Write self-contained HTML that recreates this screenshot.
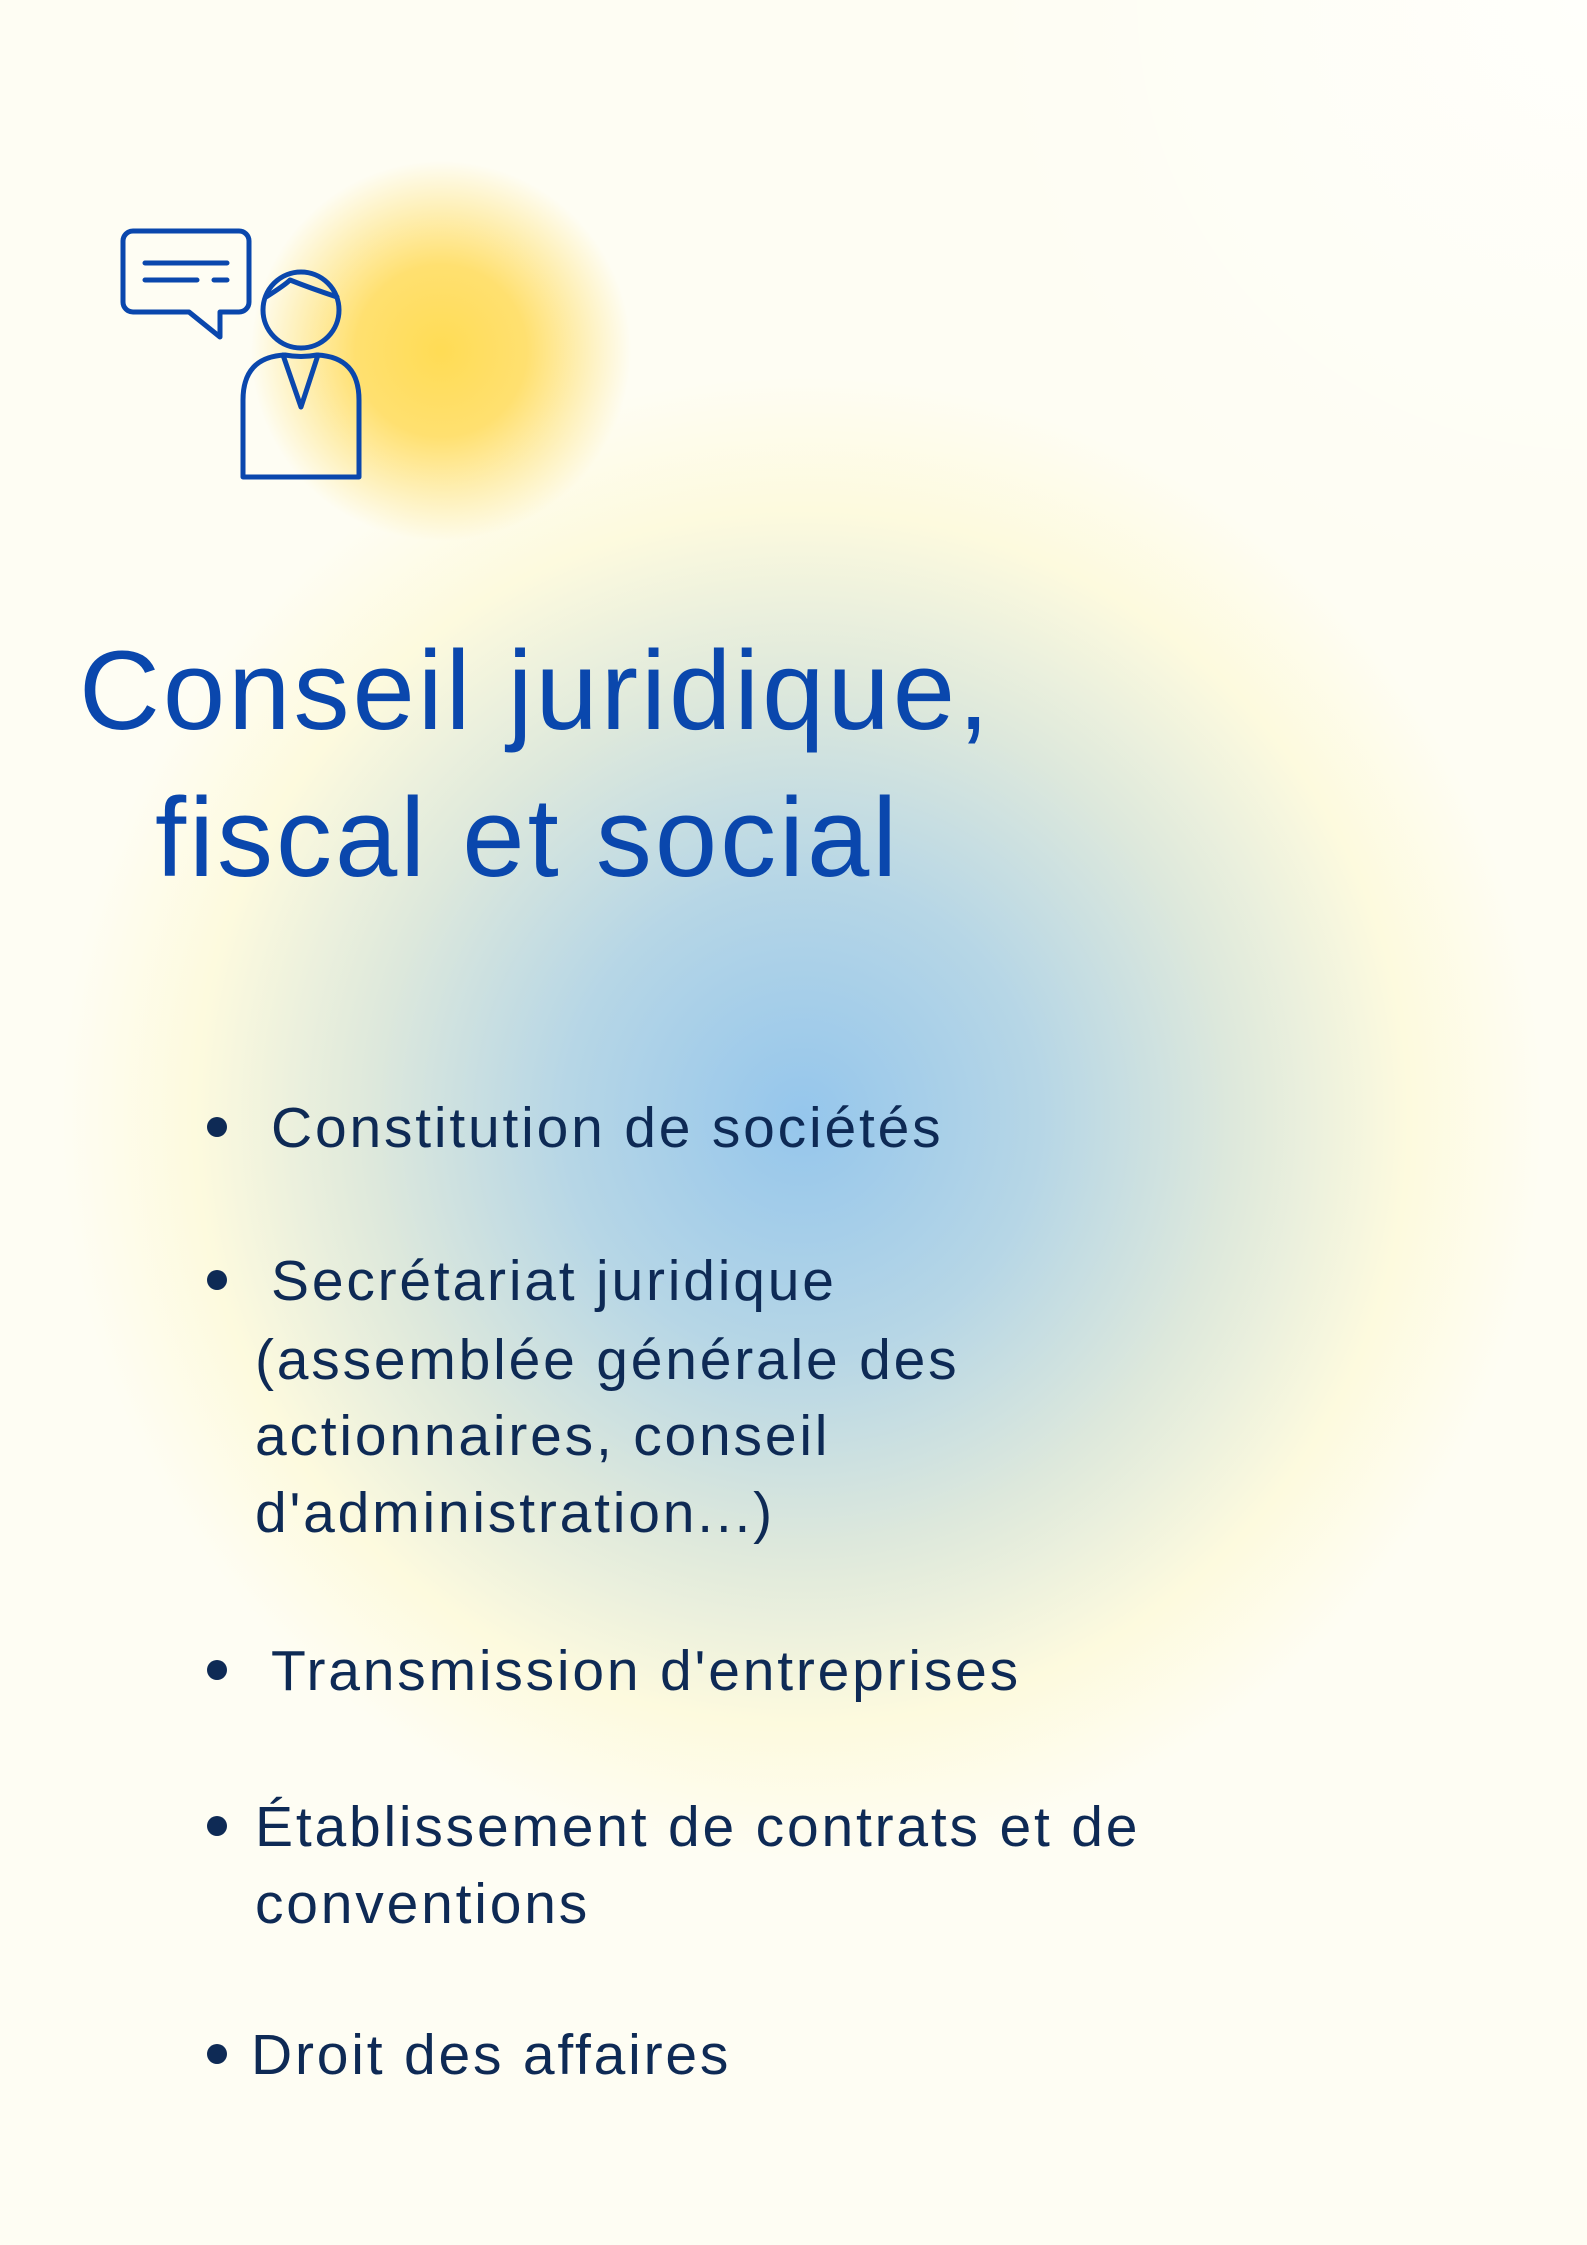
<!DOCTYPE html>
<html><head><meta charset="utf-8"><style>
html,body{margin:0;padding:0}
body{width:1587px;height:2245px;position:relative;overflow:hidden;background:#fefdf3;font-family:"Liberation Sans",sans-serif}
.bg{position:absolute;inset:0;background:
radial-gradient(circle 190px at 441px 351px,#ffdc55 0%,#ffe070 45%,rgba(255,230,120,0) 100%),
radial-gradient(circle 740px at 802px 1117px,#95c6ec 0%,#b6d6e6 32%,#dde8dc 58%,rgba(253,250,222,1) 82%,rgba(254,253,243,0) 100%),
radial-gradient(circle 600px at 1587px 0px,#fffffb 0%,rgba(255,255,250,0) 100%),
#fefdf3}
.t{position:absolute;color:#0a47ad;font-size:112px;white-space:nowrap;line-height:1;letter-spacing:3px}
.i{position:absolute;color:#0e2a55;font-size:57px;white-space:nowrap;line-height:1;letter-spacing:2.8px}
.b{position:absolute;width:20px;height:20px;border-radius:50%;background:#0e2a55}
</style></head><body>
<div class="bg"></div>
<svg style="position:absolute;left:0;top:0" width="500" height="500" fill="none" stroke="#0a47ad" stroke-width="5" stroke-linejoin="round" stroke-linecap="round">
<path d="M133 231H239a10 10 0 0 1 10 10V302a10 10 0 0 1-10 10H220V337L189 312H133a10 10 0 0 1-10-10V241a10 10 0 0 1 10-10Z"/>
<path d="M145 263H227M145 280H197M214 280H227"/>
<circle cx="301" cy="310" r="38"/>
<path d="M266 297Q285 285 290 280Q310 288 337 297"/>
<path d="M243 477V400Q243 357 285 355Q301 358 317 355Q359 357 359 400V477Z"/>
<path d="M283 355L301 407L318 355"/>
</svg>
<div class="t" style="left:79px;top:635px">Conseil juridique,</div>
<div class="t" style="left:155px;top:782px">fiscal et social</div>
<div class="b" style="left:207px;top:1117px"></div>
<div class="i" style="left:271px;top:1100px">Constitution de sociétés</div>
<div class="b" style="left:207px;top:1270px"></div>
<div class="i" style="left:271px;top:1253px">Secrétariat juridique</div>
<div class="i" style="left:255px;top:1332px">(assemblée générale des</div>
<div class="i" style="left:255px;top:1408px">actionnaires, conseil</div>
<div class="i" style="left:255px;top:1485px">d'administration...)</div>
<div class="b" style="left:207px;top:1660px"></div>
<div class="i" style="left:271px;top:1643px">Transmission d'entreprises</div>
<div class="b" style="left:207px;top:1816px"></div>
<div class="i" style="left:255px;top:1799px">Établissement de contrats et de</div>
<div class="i" style="left:255px;top:1876px">conventions</div>
<div class="b" style="left:207px;top:2044px"></div>
<div class="i" style="left:251px;top:2027px">Droit des affaires</div>
</body></html>
